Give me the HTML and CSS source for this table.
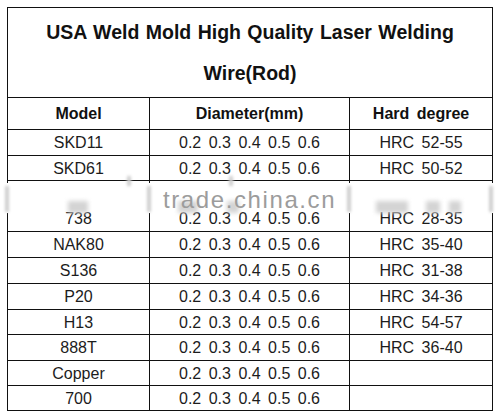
FILE: index.html
```html
<!DOCTYPE html>
<html>
<head>
<meta charset="utf-8">
<link rel="stylesheet" href="styles.css">
</head>
<body>
<div class="page">
  <table class="spec">
    <colgroup>
      <col class="c1"><col class="c2"><col class="c3">
    </colgroup>
    <tr class="r-title"><th colspan="3" class="title">USA Weld Mold High Quality Laser Welding<br>Wire(Rod)</th></tr>
    <tr class="r-head"><th>Model</th><th>Diameter(mm)</th><th>Hard degree</th></tr>
    <tr class="r26"><td>SKD11</td><td>0.2 0.3 0.4 0.5 0.6</td><td>HRC 52-55</td></tr>
    <tr class="r25"><td>SKD61</td><td>0.2 0.3 0.4 0.5 0.6</td><td>HRC 50-52</td></tr>
    <tr class="r-tall"><td>738</td><td>0.2 0.3 0.4 0.5 0.6</td><td>HRC 28-35</td></tr>
    <tr class="r26"><td>NAK80</td><td>0.2 0.3 0.4 0.5 0.6</td><td>HRC 35-40</td></tr>
    <tr class="r26"><td>S136</td><td>0.2 0.3 0.4 0.5 0.6</td><td>HRC 31-38</td></tr>
    <tr class="r26"><td>P20</td><td>0.2 0.3 0.4 0.5 0.6</td><td>HRC 34-36</td></tr>
    <tr class="r25"><td>H13</td><td>0.2 0.3 0.4 0.5 0.6</td><td>HRC 54-57</td></tr>
    <tr class="r26"><td>888T</td><td>0.2 0.3 0.4 0.5 0.6</td><td>HRC 36-40</td></tr>
    <tr class="r25"><td>Copper</td><td>0.2 0.3 0.4 0.5 0.6</td><td></td></tr>
    <tr class="r25"><td>700</td><td>0.2 0.3 0.4 0.5 0.6</td><td></td></tr>
  </table>

  <div class="mask m1"></div>
  <div class="mask m2"></div>
  <div class="mask m3"></div>
  <div class="mask m4"></div>

  <div class="smudge s1"></div>
  <div class="smudge s2"></div>
  <div class="smudge s3"></div>
  <div class="smudge s4"></div>
  <div class="smudge s5"></div>
  <div class="smudge s6"></div>
  <div class="blot b1"></div>
  <div class="blot b2"></div>
  <div class="blot b3"></div>
  <div class="blot b4"></div>
  <div class="blot b5"></div>
  <div class="blot b6"></div>

  <div class="watermark">trade.china.cn</div>
</div>
</body>
</html>
```
FILE: styles.css
```css
html, body {
  margin: 0;
  padding: 0;
  background: #ffffff;
}

.page {
  position: relative;
  width: 500px;
  height: 419px;
  padding: 7px 0 0 7px;
  box-sizing: border-box;
  font-family: "Liberation Sans", Arial, sans-serif;
  color: #1c1c1c;
}

.spec {
  border-collapse: collapse;
  table-layout: fixed;
  width: 485px;
  word-spacing: 3px;
}

.c1 { width: 142px; }
.c2 { width: 200px; }
.c3 { width: 143px; }

.spec th,
.spec td {
  border: 1px solid #111;
  padding: 0;
  text-align: center;
  vertical-align: middle;
  font-size: 16px;
  line-height: 23px;
}

.spec th {
  font-weight: bold;
  color: #111;
}

.spec .title {
  font-size: 19.5px;
  line-height: 41px;
  word-spacing: 1px;
}

.r-title { height: 90px; }
.r-head { height: 32px; }
.r26 { height: 26px; }
.r25 { height: 25px; }
.r-tall { height: 51px; }
.r-tall td { vertical-align: bottom; padding-bottom: 1px; }

.mask {
  position: absolute;
  top: 183px;
  height: 30px;
  width: 6px;
  background: #fff;
}
.m1 { left: 4px; }
.m2 { left: 146px; }
.m3 { left: 346px; }
.m4 { left: 488px; }

.smudge {
  position: absolute;
  top: 186px;
  height: 26px;
  width: 4px;
  background: #cfcfcf;
  filter: blur(1.5px);
}
.s1 { left: 5px; }
.s2 { left: 147px; }
.s3 { left: 347px; }
.s4 { left: 489px; }
.s5 { left: 127px; top: 176px; height: 10px; }
.s6 { left: 229px; top: 176px; height: 10px; }

.blot {
  position: absolute;
  top: 201px;
  height: 12px;
  background: #d4d4d4;
  filter: blur(2px);
}
.b1 { left: 68px; width: 20px; }
.b2 { left: 178px; width: 20px; }
.b3 { left: 227px; width: 12px; }
.b4 { left: 376px; width: 32px; }
.b5 { left: 426px; width: 14px; }
.b6 { left: 449px; width: 12px; }

.watermark {
  position: absolute;
  left: 163px;
  top: 188px;
  font-size: 24px;
  line-height: 24px;
  letter-spacing: 1.6px;
  color: #9c9c9c;
  white-space: nowrap;
}
```
